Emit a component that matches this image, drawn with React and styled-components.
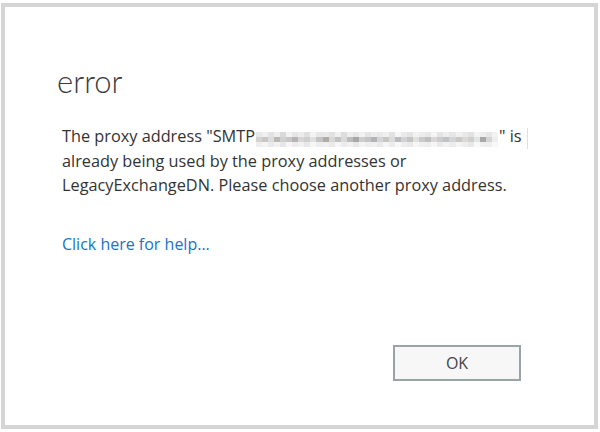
import React from "react";
import styled, { createGlobalStyle } from "styled-components";

const Global = createGlobalStyle`
  html, body { margin: 0; padding: 0; background: #ffffff; }
  body { width: 600px; height: 432px; overflow: hidden; font-family: "Open Sans", "Noto Sans", sans-serif; }
`;

const Page = styled.div`
  padding: 3px 0 0 1px;
`;

const Dialog = styled.div`
  box-sizing: border-box;
  width: 597px;
  height: 426px;
  border: 4px solid #d5d5d5;
  background: #ffffff;
  display: flex;
  flex-direction: column;
`;

const Title = styled.h1`
  margin: 0;
  padding: 54px 0 0 52px;
  font-family: "Lato", "Open Sans", sans-serif;
  font-weight: 300;
  font-size: 31px;
  line-height: 40px;
  color: #3a3a3a;
`;

const Message = styled.p`
  margin: 23px 0 0 57px;
  font-size: 16.3px;
  line-height: 24px;
  color: #333333;
  white-space: nowrap;
`;

const Mosaic = styled.span`
  display: inline-block;
  vertical-align: top;
  width: 242px;
  height: 15px;
  margin: 8px 1px 0 1px;
`;

const MosaicRow = styled.span`
  display: flex;
  height: 5px;
`;

const Tile = styled.span`
  flex: 1;
  background: ${(p) => p.$c};
`;

const Caret = styled.span`
  display: inline-block;
  vertical-align: top;
  width: 1px;
  height: 21px;
  margin: 4px 0 0 5px;
  background: #e0e0e0;
`;

const HelpLink = styled.a`
  display: block;
  margin: 35px 0 0 57px;
  font-size: 16px;
  line-height: 24px;
  color: #1774c6;
  text-decoration: none;
  cursor: pointer;
`;

const Footer = styled.div`
  margin-top: auto;
  display: flex;
  justify-content: flex-end;
  padding: 0 73px 44px 0;
`;

const Button = styled.button`
  box-sizing: border-box;
  width: 128px;
  height: 36px;
  border: 2px solid #9aa4a6;
  background: #f7f7f7;
  font-family: "Open Sans", "Noto Sans", sans-serif;
  font-size: 16px;
  color: #444444;
  padding: 0;
  cursor: pointer;
`;

const top = [
  "#e8e8e8","#f0f0f0","#e4e2e0","#eeeeee","#dcdad8","#f2f2f2","#e6e6e8","#ececec",
  "#e0e0e0","#f4f4f4","#e8e6e6","#eaeaea","#e2e2e4","#f0f0f0","#dedede","#eeeeee",
  "#e6e6e6","#f2f2f2","#e4e4e4","#ececec","#e8e8ea","#f0f0f0","#e2e2e2","#f6f6f6",
  "#eaeaea","#e6e4e2","#f2f2f2","#ececec","#e8e8e8","#f4f4f4","#e4e4e4","#eeeeee",
  "#e6e6e6","#f0f0f0","#e8e8e8","#e2e2e2","#f4f4f4","#eeeeee","#e6e6e6","#f2f2f2",
];
const mid = [
  "#d6d2ce","#c9c6c6","#dcdcdc","#bdb6b2","#d0d0d2","#c8c8c8","#b8b4b6","#d6d6d6",
  "#cfcfcf","#e0e0e0","#c6c4c4","#b0aaa8","#d8d8d8","#c2c2c4","#dadada","#bebcbc",
  "#a9a6aa","#cdcdcd","#c4c4c6","#b4b2b4","#d4d4d4","#c8c6c4","#dcdcdc","#bcbcc0",
  "#d2d2d2","#c6c4c2","#e0e0e0","#cacaca","#c0bebe","#d8d8d8","#cccccc","#bfc2c6",
  "#d4d4d4","#c8c8c8","#dcd8d4","#cfcfcf","#e4e4e4","#a8a8a8","#d4d4d4","#eeeeee",
];
const bottom = [
  "#eeeeee","#f4f4f4","#eaeaea","#f2f2f2","#e6e6e6","#f6f6f6","#ececec","#f2f2f2",
  "#e8e8e8","#f6f6f6","#eeeeee","#f0f0f0","#eaeaea","#f6f6f6","#ececec","#f2f2f2",
  "#e8e8e8","#f4f4f4","#eeeeee","#f0f0f0","#eaeaea","#f6f6f6","#ececec","#f8f8f8",
  "#eeeeee","#eaeaea","#f6f6f6","#f0f0f0","#eeeeee","#f6f6f6","#eaeaea","#f2f2f2",
  "#ececec","#f4f4f4","#eeeeee","#e8e8e8","#f8f8f8","#f0f0f0","#eeeeee","#f8f8f8",
];

function Redacted() {
  return (
    <Mosaic aria-hidden="true">
      {[top, mid, bottom].map((row, r) => (
        <MosaicRow key={r}>
          {row.map((c, i) => (
            <Tile key={i} $c={c} />
          ))}
        </MosaicRow>
      ))}
    </Mosaic>
  );
}

export default function App() {
  return (
    <>
      <Global />
      <Page>
        <Dialog role="dialog">
          <Title>error</Title>
          <Message>
            The proxy address "SMTP<Redacted />" is<Caret />
            <br />
            already being used by the proxy addresses or
            <br />
            LegacyExchangeDN. Please choose another proxy address.
          </Message>
          <HelpLink>Click here for help...</HelpLink>
          <Footer>
            <Button>OK</Button>
          </Footer>
        </Dialog>
      </Page>
    </>
  );
}
